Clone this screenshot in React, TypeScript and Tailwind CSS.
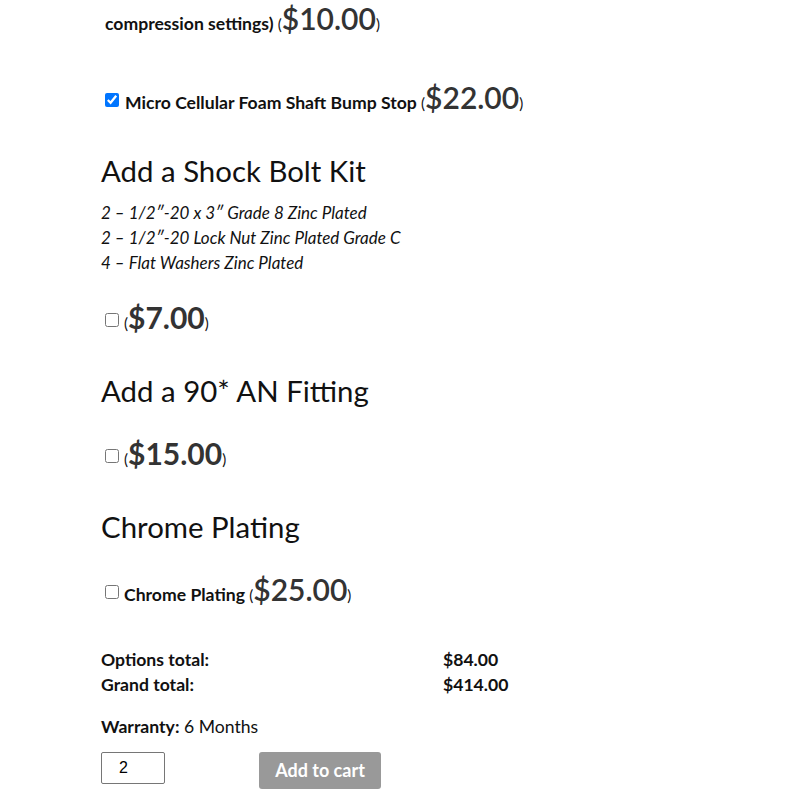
import React from "react";

function Price({ v, bold }: { v: string; bold?: boolean }) {
  return (
    <span className="text-[15px] font-normal text-[#111]">
      (
      <span className={`text-[30px] text-[#333] ${bold ? "font-bold" : "font-semibold"}`}>{v}</span>)
    </span>
  );
}

export default function App() {
  return (
    <div className="bg-white min-h-[811px] w-[785px] text-[#111] pl-[101px]" style={{ fontFamily: "Lato, 'Noto Sans', sans-serif" }}>
      <div className="h-[36px] leading-[36px] pl-[4px] font-bold text-[17.6px] whitespace-nowrap">
        compression settings) <Price v="$10.00" />
      </div>

      <div className="mt-[46px] h-[36px] leading-[36px] font-bold text-[17.6px] whitespace-nowrap flex items-center">
        <input type="checkbox" defaultChecked className="w-[14px] h-[14px] ml-[4px] mr-[6px] accent-[#0075ff]" />
        <span>Micro Cellular Foam Shaft Bump Stop <Price v="$22.00" /></span>
      </div>

      <h3 className="mt-[33px] h-[40px] leading-[40px] text-[29.4px] font-normal">Add a Shock Bolt Kit</h3>
      <div className="mt-[9px] italic text-[17px] leading-[25px]">
        <div>2 – 1/2″-20 x 3″ Grade 8 Zinc Plated</div>
        <div>2 – 1/2″-20 Lock Nut Zinc Plated Grade C</div>
        <div>4 – Flat Washers Zinc Plated</div>
      </div>

      <div className="mt-[27px] h-[36px] leading-[36px] flex items-center whitespace-nowrap">
        <input type="checkbox" className="w-[14px] h-[14px] ml-[4px] mr-[5px]" />
        <Price v="$7.00" bold />
      </div>

      <h3 className="mt-[33px] h-[40px] leading-[40px] text-[29.4px] font-normal">Add a 90* AN Fitting</h3>
      <div className="mt-[27px] h-[36px] leading-[36px] flex items-center whitespace-nowrap">
        <input type="checkbox" className="w-[14px] h-[14px] ml-[4px] mr-[5px]" />
        <Price v="$15.00" bold />
      </div>

      <h3 className="mt-[33px] h-[40px] leading-[40px] text-[29.4px] font-normal">Chrome Plating</h3>
      <div className="mt-[27px] h-[36px] leading-[36px] font-bold text-[17.6px] flex items-center whitespace-nowrap">
        <input type="checkbox" className="w-[14px] h-[14px] ml-[4px] mr-[5px]" />
        <span>Chrome Plating <Price v="$25.00" /></span>
      </div>

      <div className="mt-[37px] grid grid-cols-[342px_1fr] text-[17.6px] leading-[25px] font-bold">
        <div>Options total:</div>
        <div>$84.00</div>
        <div>Grand total:</div>
        <div>$414.00</div>
      </div>

      <div className="mt-[17px] text-[17.6px] leading-[25px]">
        <span className="font-bold">Warranty:</span> 6 Months
      </div>

      <div className="mt-[13px] flex items-start">
        <input
          type="text"
          defaultValue="2"
          className="w-[64px] h-[32px] border border-[#767676] rounded-[2px] px-[17px] text-[16px] text-black outline-none"
          style={{ fontFamily: "Arial, 'Liberation Sans', sans-serif" }}
        />
        <button className="ml-[94px] w-[122px] h-[37px] rounded-[3px] bg-[#999999] text-white font-bold text-[18px] leading-[37px]">
          Add to cart
        </button>
      </div>
    </div>
  );
}
